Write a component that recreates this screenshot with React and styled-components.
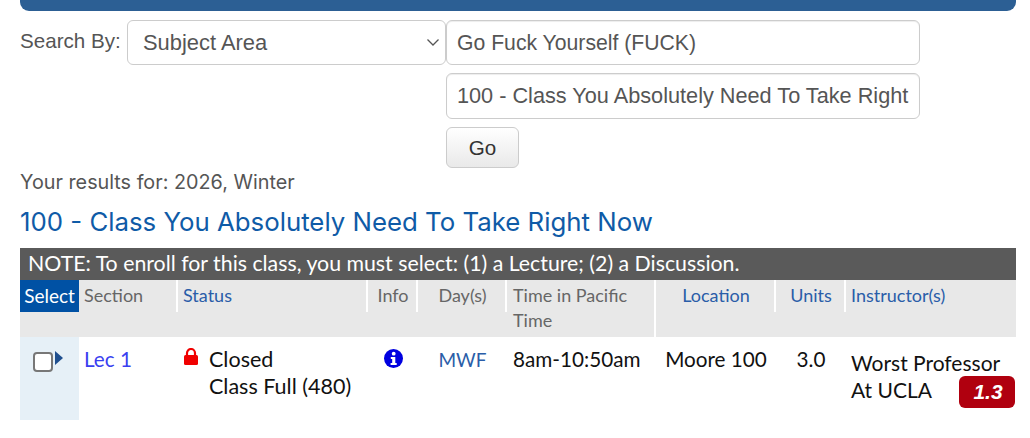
import * as React from 'react';
import styled, { createGlobalStyle } from 'styled-components';

const COLUMNS = '59px 99px 190px 50px 89px 149px 120px 70px 170px';

const GlobalStyle = createGlobalStyle`
  html, body {
    margin: 0;
    background: #fff;
  }
  body {
    font-family: "Liberation Sans", Arial, sans-serif;
    overflow: hidden;
  }
`;

const Page = styled.div`
  width: 996px;
  height: 438px;
  margin-left: 20px;
  display: flex;
  flex-direction: column;
`;

const TopBar = styled.div`
  height: 11px;
  background-color: #2c5f94;
  border-radius: 0 0 9px 9px;
`;

const SearchForm = styled.form`
  display: flex;
  margin-top: 9px;
`;

const SearchLabel = styled.label`
  width: 107px;
  font-size: 20.6px;
  line-height: 42px;
  color: #555;
`;

const SelectWrap = styled.div`
  position: relative;
  width: 319px;
  height: 45px;
`;

const Select = styled.select`
  appearance: none;
  box-sizing: border-box;
  width: 100%;
  height: 100%;
  padding: 0 15px;
  background: #fff;
  border: 1px solid #ccc;
  border-radius: 6px;
  font-family: inherit;
  font-size: 21.9px;
  color: #555;
`;

const Chevron = styled.svg`
  position: absolute;
  top: 18px;
  right: 6px;
  width: 14px;
  height: 9px;
  pointer-events: none;
`;

const FieldStack = styled.div`
  display: flex;
  flex-direction: column;
  align-items: flex-start;
`;

const TextField = styled.input`
  box-sizing: border-box;
  width: 474px;
  height: ${({ $first }) => ($first ? '45px' : '46px')};
  margin-bottom: 8px;
  padding: ${({ $first }) => ($first ? '1px 10px 0' : '0 10px')};
  background: #fff;
  border: 1px solid #ccc;
  border-radius: 6px;
  box-shadow: inset 0 1px 1px rgba(0, 0, 0, 0.075);
  font-family: inherit;
  font-size: ${({ $first }) => ($first ? '21.2px' : '21.7px')};
  color: #555;
  outline: none;
`;

const GoButton = styled.button`
  width: 73px;
  height: 41px;
  padding: 0;
  background: linear-gradient(#fff, #e9e9e9);
  border: 1px solid #ccc;
  border-radius: 6px;
  font-family: inherit;
  font-size: 20.6px;
  color: #333;
`;

const Results = styled.p`
  margin: 2px 0 0;
  font-family: "Inter", sans-serif;
  font-size: 19.8px;
  line-height: 24px;
  color: #555;
`;

const Title = styled.h3`
  margin: 13px 0 0;
  font-family: "Inter", sans-serif;
  font-size: 25.8px;
  font-weight: 400;
  line-height: 30px;
  color: #0f5ba7;
`;

const Note = styled.div`
  margin-top: 11px;
  height: 32px;
  padding-left: 8px;
  background-color: #5a5a5a;
  color: #fff;
  font-family: "Lato", sans-serif;
  font-size: 21.3px;
  line-height: 31px;
`;

const Table = styled.div`
  position: relative;
  display: grid;
  grid-template-columns: ${COLUMNS};
  font-family: "Lato", sans-serif;
`;

const HeadCell = styled.div`
  position: relative;
  height: 57px;
  box-sizing: border-box;
  padding: ${({ $inset }) => ($inset ? '3px 6px 0' : '3px 5px 0')};
  background-color: #e8e8e8;
  color: ${({ $link }) => ($link ? '#2a5da8' : '#666')};
  font-size: 18px;
  line-height: 25px;
  text-align: ${({ $center }) => ($center ? 'center' : 'left')};
  border-right: ${({ $full }) => ($full ? '2px solid #fff' : 'none')};

  &::after {
    content: '';
    display: ${({ $rule }) => ($rule ? 'block' : 'none')};
    position: absolute;
    top: 0;
    right: 0;
    width: 2px;
    height: 32px;
    background: #fff;
  }
`;

const SelectHead = styled.div`
  height: 57px;
  background: linear-gradient(#0051a4 32px, #e8e8e8 32px);
  color: #fff;
  font-size: 19px;
  line-height: 31px;
  text-align: center;
`;

const Cell = styled.div`
  height: 83px;
  box-sizing: border-box;
  padding: ${({ $inset }) => ($inset ? '9px 6px 0' : '9px 5px 0')};
  color: #111;
  font-size: 20.7px;
  line-height: 27px;
  text-align: ${({ $center }) => ($center ? 'center' : 'left')};
`;

const SelectCell = styled(Cell)`
  display: flex;
  align-items: flex-start;
  padding: 15px 0 0 13px;
  background-color: #e6f0f7;
`;

const Check = styled.span`
  box-sizing: border-box;
  width: 20px;
  height: 20px;
  border: 2px solid #777;
  border-radius: 4px;
  background: #fff;
`;

const Caret = styled.svg`
  width: 8px;
  height: 14px;
  margin: -1px 0 0 2px;
`;

const StatusLine = styled.div`
  display: flex;
  gap: 10px;
  font-size: 21.5px;
`;

const LockIcon = styled.svg`
  flex: none;
  width: 16px;
  height: 17px;
  margin-top: 2px;
`;

const InfoIcon = styled.svg`
  display: block;
  width: 19px;
  height: 19px;
  margin: 3px 0 0 11px;
`;

const SectionLink = styled.a`
  color: #3a3ff0;
`;

const DayLink = styled.a`
  color: #2a5da8;
  font-size: 19px;
`;

const InstructorName = styled.div`
  padding-top: 3px;
  font-size: 21px;
`;

const RatingBadge = styled.span`
  position: absolute;
  right: 1px;
  top: 96px;
  width: 56px;
  height: 32px;
  padding-left: 2px;
  box-sizing: border-box;
  background-color: #b0000f;
  border-radius: 6px;
  color: #fff;
  font-family: "Liberation Sans", sans-serif;
  font-size: 21px;
  font-style: italic;
  font-weight: 700;
  line-height: 32px;
  text-align: center;
`;

export default function App() {
  return (
    <>
      <GlobalStyle />
      <Page>
        <TopBar />
        <SearchForm>
          <SearchLabel>Search By:</SearchLabel>
          <SelectWrap>
            <Select defaultValue="subject">
              <option value="subject">Subject Area</option>
            </Select>
            <Chevron viewBox="0 0 14 9">
              <path d="M1.5 1.5 7 7l5.5-5.5" fill="none" stroke="#555" strokeWidth="1.3" />
            </Chevron>
          </SelectWrap>
          <FieldStack>
            <TextField $first readOnly value="Go Fuck Yourself (FUCK)" />
            <TextField readOnly value="100 - Class You Absolutely Need To Take Right Now" />
            <GoButton type="button">Go</GoButton>
          </FieldStack>
        </SearchForm>
        <Results>Your results for: 2026, Winter</Results>
        <Title>100 - Class You Absolutely Need To Take Right Now</Title>
        <Note>NOTE: To enroll for this class, you must select: (1) a Lecture; (2) a Discussion.</Note>
        <Table>
          <SelectHead>Select</SelectHead>
          <HeadCell $rule>Section</HeadCell>
          <HeadCell $rule $link>Status</HeadCell>
          <HeadCell $rule $center>Info</HeadCell>
          <HeadCell $rule $center>Day(s)</HeadCell>
          <HeadCell $full $inset>Time in Pacific Time</HeadCell>
          <HeadCell $rule $link $center>Location</HeadCell>
          <HeadCell $rule $link $center>Units</HeadCell>
          <HeadCell $link>Instructor(s)</HeadCell>

          <SelectCell>
            <Check />
            <Caret viewBox="0 0 8 14">
              <path d="M0 0l8 7-8 7z" fill="#1f4f8f" />
            </Caret>
          </SelectCell>
          <Cell>
            <SectionLink>Lec 1</SectionLink>
          </Cell>
          <Cell>
            <StatusLine>
              <LockIcon viewBox="0 0 16 17">
                <path d="M4 8V5a4 4 0 0 1 8 0v3" fill="none" stroke="#f00000" strokeWidth="2.2" />
                <rect x="1" y="7" width="14" height="10" rx="1.5" fill="#f00000" />
              </LockIcon>
              <div>
                Closed
                <br />
                Class Full (480)
              </div>
            </StatusLine>
          </Cell>
          <Cell>
            <InfoIcon viewBox="0 0 19 19">
              <circle cx="9.5" cy="9.5" r="9.5" fill="#0000e0" />
              <circle cx="9.7" cy="4.7" r="1.9" fill="#fff" />
              <path d="M6.8 8h4.5v6h1.4v2H6.6v-2h1.6v-4H6.8z" fill="#fff" />
            </InfoIcon>
          </Cell>
          <Cell $center>
            <DayLink>MWF</DayLink>
          </Cell>
          <Cell $inset>8am-10:50am</Cell>
          <Cell $center>Moore 100</Cell>
          <Cell $center>3.0</Cell>
          <Cell>
            <InstructorName>
              Worst Professor
              <br />
              At UCLA
            </InstructorName>
          </Cell>
          <RatingBadge>1.3</RatingBadge>
        </Table>
      </Page>
    </>
  );
}
